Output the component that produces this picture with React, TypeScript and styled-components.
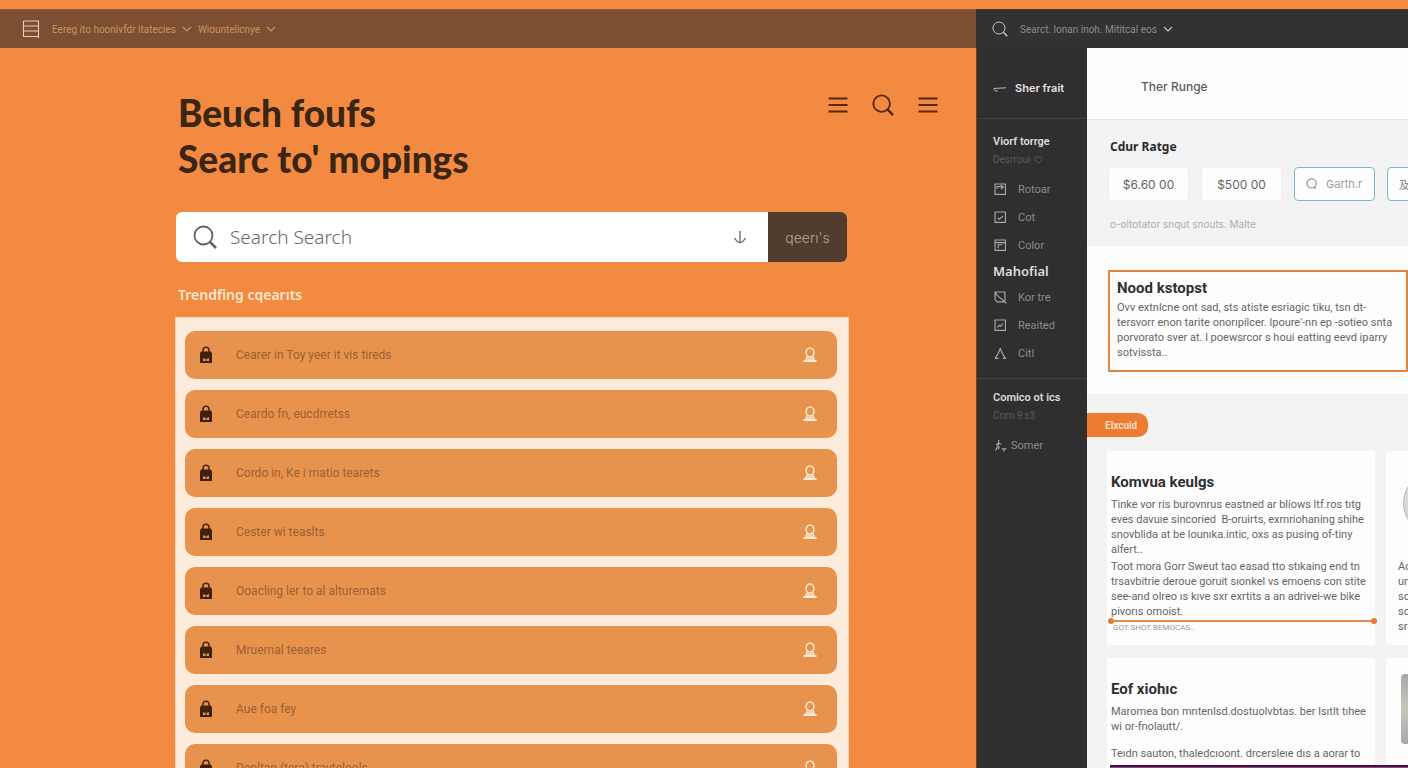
import React from "react";
import styled, { createGlobalStyle } from "styled-components";

const GlobalStyle = createGlobalStyle`
  * { box-sizing: border-box; }
  body { margin: 0; font-family: Roboto, "Liberation Sans", sans-serif; background: #f38a41; overflow: hidden; }
  h1, h2, h3, p, ul { margin: 0; padding: 0; }
  ul { list-style: none; }
  a { color: inherit; text-decoration: none; }
  button { font-family: Inter, sans-serif; border: 0; background: none; padding: 0; cursor: pointer; }
  svg { display: block; flex: none; }
`;

const Page = styled.div`
  height: 100vh;
  overflow: hidden;
  display: flex;
  flex-direction: column;
  padding-top: 9px;
`;

const Columns = styled.div`
  flex: 1;
  min-height: 0;
  display: grid;
  grid-template-columns: minmax(0, 1fr) 432px;
`;

const Pane = styled.section`
  display: flex;
  flex-direction: column;
  min-width: 0;
  min-height: 0;
`;

const TopBar = styled.nav<{ $dark?: boolean }>`
  flex: none;
  height: 39px;
  display: flex;
  align-items: center;
  padding: 0 ${(p) => (p.$dark ? 16 : 22)}px;
  gap: 12px;
  font-size: 10px;
  color: ${(p) => (p.$dark ? "#8b8a89" : "#c9935f")};
  background: ${(p) => (p.$dark ? "#323232" : "#7c4f33")};
  border-top: 1px solid ${(p) => (p.$dark ? "#4a3a2e" : "#8f5732")};
`;

const BarLink = styled.a`
  display: flex;
  align-items: center;
  gap: 6px;
  white-space: nowrap;
`;

const BarLinks = styled.div`
  display: flex;
  gap: 6px;
`;

const Hero = styled.main`
  width: 674px;
  max-width: 100%;
  margin-left: 175px;
  padding-top: 42px;
  display: flex;
  flex-direction: column;
`;

const Title = styled.h1`
  font-family: Lato, "Open Sans", sans-serif;
  font-weight: 900;
  font-size: 37px;
  line-height: 46px;
  color: #3b2514;
  padding-left: 3px;
`;

const HeroTop = styled.div`
  display: flex;
  justify-content: space-between;
  align-items: flex-start;
  margin-right: -89px;
`;

const HeroActions = styled.div`
  display: flex;
  align-items: center;
  gap: 24px;
  padding-top: 4px;
`;

const SearchForm = styled.form`
  display: flex;
  height: 50px;
  margin: 30px 2px 0 1px;
  border-radius: 6px;
  overflow: hidden;
  background: #fff;
  align-items: center;
`;

const SearchIconWrap = styled.label`
  padding: 0 13px 0 17px;
`;

const SearchInput = styled.input`
  flex: 1;
  min-width: 0;
  border: 0;
  outline: 0;
  background: none;
  padding: 0;
  font-family: "Noto Sans", sans-serif;
  font-size: 19px;
  font-weight: 300;
  color: #6b6863;
  &::placeholder { color: #6b6863; opacity: 1; }
`;

const SortButton = styled.button`
  margin-right: 21px;
`;

const SubmitButton = styled.button`
  align-self: stretch;
  width: 79px;
  background: #513c2d;
  color: #b5a698;
  font-size: 14px;
  font-weight: 300;
`;

const TrendTitle = styled.h2`
  font-family: "Noto Sans", sans-serif;
  font-size: 14px;
  line-height: 20px;
  font-weight: 600;
  color: #fde6cd;
  margin: 23px 0 12px 3px;
`;

const TrendList = styled.ul`
  background: #fdebdb;
  border: 1px solid #fbd9ba;
  padding: 13px 11px 12px 9px;
  display: flex;
  flex-direction: column;
  gap: 11px;
`;

const TrendLink = styled.a`
  display: flex;
  align-items: center;
  height: 48px;
  border-radius: 10px;
  padding: 0 20px 0 14px;
  gap: 23px;
  background: #e7934e;
  color: #9f5f32;
  font-size: 12px;
`;

const Grow = styled.span`
  flex: 1;
`;

const RightBody = styled.div`
  flex: 1;
  min-height: 0;
  display: grid;
  grid-template-columns: 111px minmax(0, 1fr);
`;

const Sidebar = styled.aside`
  background: #2f2f30;
  color: #8c8b8a;
  border-left: 1px solid #6b4428;
`;

const SideBack = styled.a`
  display: flex;
  align-items: center;
  gap: 8px;
  height: 71px;
  padding: 10px 0 0 16px;
  border-bottom: 1px solid #404041;
  color: #e4e3e2;
  font-family: Inter, sans-serif;
  font-size: 11px;
  font-weight: 600;
  white-space: nowrap;
`;

const SideGroup = styled.div`
  padding: 15px 0 11px 16px;
  & + & { border-top: 1px solid #434344; padding-top: 11px; }
`;

const SideTitle = styled.h3<{ $large?: boolean }>`
  font-family: ${(p) => (p.$large ? '"Noto Sans"' : "Roboto")}, sans-serif;
  font-size: ${(p) => (p.$large ? 13 : 11)}px;
  line-height: ${(p) => (p.$large ? 24 : 16)}px;
  font-weight: 600;
  color: #dedcda;
  white-space: nowrap;
`;

const SideNote = styled.p`
  display: flex;
  align-items: center;
  gap: 4px;
  font-size: 10px;
  line-height: 20px;
  margin-bottom: 5px;
  color: #5b5b5b;
`;

const SideItem = styled.a<{ $tight?: boolean }>`
  display: flex;
  align-items: center;
  gap: ${(p) => (p.$tight ? 4 : 11)}px;
  height: 28px;
  padding-left: 1px;
  font-size: 11px;
`;

const Content = styled.div`
  background: #fdfdfd;
  overflow: hidden;
  min-width: 0;
`;

const ContentHead = styled.header`
  height: 71px;
  padding: 29px 0 0 54px;
  font-family: Inter, sans-serif;
  font-size: 12px;
  line-height: 20px;
  font-weight: 500;
  color: #5d5d5d;
`;

const FilterPanel = styled.section`
  height: 127px;
  background: #f3f3f3;
  border-top: 1px solid #e6e6e6;
  padding: 18px 0 0 21px;
`;

const FilterTitle = styled.h2`
  font-family: "Noto Sans", sans-serif;
  font-size: 12px;
  line-height: 18px;
  font-weight: 700;
  color: #2a2a2a;
  padding-left: 2px;
`;

const ChipRow = styled.div`
  display: flex;
  gap: 12px;
  margin-top: 11px;
`;

const Chip = styled.button<{ $outlined?: boolean }>`
  flex: none;
  display: flex;
  align-items: center;
  justify-content: ${(p) => (p.$outlined ? "flex-start" : "center")};
  gap: 8px;
  width: 81px;
  height: 34px;
  padding-left: ${(p) => (p.$outlined ? 11 : 0)}px;
  border-radius: 4px;
  background: #fdfdfd;
  border: 1px solid ${(p) => (p.$outlined ? "#7bb9d2" : "#f0f0f0")};
  color: ${(p) => (p.$outlined ? "#9d9d9d" : "#666")};
  font-size: ${(p) => (p.$outlined ? 11 : 12)}px;
  white-space: nowrap;
`;

const ChipGlyphs = styled.span`
  font-family: Inter, "Noto Sans CJK SC", sans-serif;
  font-size: 10px;
  color: #777;
`;

const FilterNote = styled.p`
  font-family: Inter, sans-serif;
  font-size: 10px;
  line-height: 16px;
  color: #adadad;
  margin: 15px 0 0 2px;
`;

const Notice = styled.article`
  margin: 24px 0 22px 21px;
  height: 102px;
  border: 2px solid #df8440;
  padding: 6px 6px 0 7px;
`;

const CardTitle = styled.h2`
  font-size: 15px;
  line-height: 20px;
  font-weight: 700;
  color: #303030;
`;

const CardText = styled.p<{ $gap?: number }>`
  font-size: 11px;
  line-height: 15px;
  color: #666;
  white-space: pre;
  margin-top: ${(p) => p.$gap ?? 2}px;
`;

const CardArea = styled.section`
  background: #f3f3f3;
  padding: 19px 0 0;
`;

const Tag = styled.span`
  display: flex;
  align-items: center;
  width: 61px;
  height: 24px;
  padding-left: 18px;
  border-radius: 0 10px 10px 0;
  background: #ee7b32;
  color: #fde0c6;
  font-size: 10px;
  font-weight: 600;
`;

const CardGrid = styled.div`
  display: grid;
  grid-template-columns: 268px 268px;
  gap: 13px 11px;
  padding: 14px 0 0 20px;
`;

const Card = styled.article`
  background: #fdfdfd;
  border-radius: 3px;
  padding: 21px 0 0 4px;
  min-height: 194px;
`;

const Divider = styled.hr`
  position: relative;
  height: 2px;
  border: 0;
  margin: 1px 0 0 -1px;
  background: #e58a4a;
  overflow: visible;
  &::before, &::after {
    content: "";
    position: absolute;
    top: -2px;
    width: 6px;
    height: 6px;
    border-radius: 50%;
    background: #e57a33;
  }
  &::before { left: -2px; }
  &::after { right: -2px; }
`;

const FinePrint = styled.small`
  display: block;
  font-size: 8px;
  line-height: 12px;
  color: #999;
  padding-left: 2px;
`;

const MediaCard = styled(Card)`
  padding: 16px 0 0 12px;
`;

const Dial = styled.div`
  width: 64px;
  height: 64px;
  border-radius: 50%;
  margin: 4px 0 24px 5px;
  background: #dcd9d5;
  border: 1px solid #b9b5b0;
`;

const Thumb = styled.div`
  width: 90px;
  height: 70px;
  margin-left: 3px;
  border-radius: 4px;
  background: linear-gradient(#aaa6a3, #c9c5c1 50%, #aaa6a3);
`;

const PurpleBar = styled.div`
  position: relative;
  z-index: 1;
  height: 12px;
  margin: 4px -279px 0 -1px;
  background: #8a4a88;
  border-top: 2px solid #45123f;
`;

const MagnifierIcon = ({ size, color, width = 1.5 }: { size: number; color: string; width?: number }) => (
  <svg width={size} height={size} viewBox="0 0 24 24" fill="none" stroke={color} strokeWidth={width} aria-hidden="true">
    <circle cx="10.5" cy="10.5" r="9" />
    <path d="M17 17l6 6" strokeWidth={width * 1.4} />
  </svg>
);

const RoundMagnifierIcon = () => (
  <svg width="12" height="12" viewBox="0 0 12 12" fill="none" stroke="#8f8f8f" strokeWidth="1.2" aria-hidden="true">
    <circle cx="5.6" cy="5.400" r="4.600" />
    <path d="M8 8.500l2 2.500" />
  </svg>
);

const ChevronIcon = ({ color }: { color: string }) => (
  <svg width="10" height="6" viewBox="0 0 10 6" fill="none" stroke={color} strokeWidth="1.2" aria-hidden="true">
    <path d="M1 1l4 4 4-4" />
  </svg>
);

const MenuIcon = () => (
  <svg width="20" height="20" viewBox="0 0 20 20" stroke="#54290f" strokeWidth="1.8" aria-hidden="true">
    <path d="M0.5 3.500h19M0.5 10h19M0.5 16.500h19" />
  </svg>
);

const GridIcon = () => (
  <svg width="18" height="18" viewBox="0 0 18 18" fill="none" stroke="#e3cdbb" strokeWidth="1.1" aria-hidden="true">
    <path d="M1.5 1h15v17M1.5 1v15.500h15M1.500 6h15M1.500 11h15" />
  </svg>
);

const DownIcon = () => (
  <svg width="14" height="14" viewBox="0 0 14 14" fill="none" stroke="#66625c" strokeWidth="1.3" aria-hidden="true">
    <path d="M7 1v11.500M1.500 8c1.500 2.500 3.500 4.500 5.500 4.500s4-2 5.500-4.500" />
  </svg>
);

const BagIcon = () => (
  <svg width="14" height="18" viewBox="0 0 14 18" aria-hidden="true">
    <path d="M4 6V4.200a3 3 0 0 1 6 0V6" fill="none" stroke="#4a2612" strokeWidth="1.500" />
    <path d="M2 5.500h10l1 2V17H1V7.500z" fill="#42200f" />
    <path d="M4 12l2 1 1-.6 1 .6 2-1v3H4z" fill="#d9905a" />
    <path d="M7 12.500v2.500" stroke="#42200f" strokeWidth=".8" />
  </svg>
);

const PersonIcon = () => (
  <svg width="14" height="16" viewBox="0 0 14 16" fill="none" stroke="#fdead6" aria-hidden="true">
    <ellipse cx="7" cy="5.500" rx="3.900" ry="4.500" strokeWidth="1.500" />
    <path d="M4.200 9.500L3 12h8L9.800 9.500" strokeWidth="1.300" />
    <path d="M.5 14h13" strokeWidth="2" />
  </svg>
);

const ArrowLineIcon = () => (
  <svg width="14" height="8" viewBox="0 0 14 8" fill="none" stroke="#b9b8b7" aria-hidden="true">
    <path d="M1 4.500L13 3.800M1 4.500c0 2 1 2.500 4 2.500" />
  </svg>
);

const HeartIcon = () => (
  <svg width="9" height="8" viewBox="0 0 9 8" fill="none" stroke="#5b5b5b" aria-hidden="true">
    <path d="M4.500 7.300L1 3.800C0 2 2 0 4.500 1.500 7 0 9 2 8 3.800z" />
  </svg>
);

const sideGlyphs: Record<string, string> = {
  arrow: "M1 1h10v10H1zM3 5.500V3.500h6M6.500 2l2.500 2-2.500 2",
  check: "M1 1h10v10H1zM3.500 6.500l1.500 1.500 3.500-3",
  corner: "M1 1h10v10H1zM1 3.500h10M4 9V5.500h4",
  slash: "M1 1h9.500v9.500H3L1 8.500zM1 1.500c3 5 7 6 11 10.500",
  wave: "M1 1h10v10H1zM3.500 8L5 6l1.500 1 2-2.500",
  peak: "M1 11C3 8 5 5 6 1c1 4 3 7 5 10H8.500M1 11h3.500",
  run: "M4.500 1v3L2 5.500M4.500 4L7 5M4.500 5L1.500 11M5 7l-1 3M7.500 9.500H12M9.500 9.500V12",
};

const SideIcon = ({ name }: { name: string }) => (
  <svg width="13" height="13" viewBox="0 0 12.500 12.500" fill="none" stroke="#a9a8a7" strokeWidth="1.100" aria-hidden="true">
    <path d={sideGlyphs[name]} />
  </svg>
);

const trends = [
  "Cearer in Toy yeer it vis tireds",
  "Ceardo fn, eucdrretss",
  "Cordo in, Ke i matio tearets",
  "Cester wi teaslts",
  "Ooacling ler to al alturemats",
  "Mruernal teeares",
  "Aue foa fey",
  "Depltan (tera) traytelools",
];

const filters: [string, string][] = [["arrow", "Rotoar"], ["check", "Cot"], ["corner", "Color"]];
const materials: [string, string][] = [["slash", "Kor tre"], ["wave", "Reaited"], ["peak", "Citl"]];

export default function App() {
  return (
    <>
      <GlobalStyle />
      <Page>
        <Columns>
          <Pane>
            <TopBar>
              <GridIcon />
              <BarLinks>
                <BarLink href="#">Eereg ito hoonivfdr itatecies <ChevronIcon color="#c9935f" /></BarLink>
                <BarLink href="#">Wiountelicnye <ChevronIcon color="#c9935f" /></BarLink>
              </BarLinks>
            </TopBar>
            <Hero>
              <HeroTop>
                <Title>Beuch foufs<br />Searc to' mopings</Title>
                <HeroActions>
                  <button aria-label="Menu"><MenuIcon /></button>
                  <button aria-label="Search"><MagnifierIcon size={22} color="#54290f" width={2} /></button>
                  <button aria-label="Options"><MenuIcon /></button>
                </HeroActions>
              </HeroTop>
              <SearchForm onSubmit={(e) => e.preventDefault()}>
                <SearchIconWrap htmlFor="search" aria-label="Search"><MagnifierIcon size={24} color="#66625c" width={1.8} /></SearchIconWrap>
                <SearchInput id="search" placeholder="Search Search" />
                <SortButton type="button" aria-label="Sort"><DownIcon /></SortButton>
                <SubmitButton type="submit">qeerı's</SubmitButton>
              </SearchForm>
              <TrendTitle>Trendfing cqearıts</TrendTitle>
              <TrendList>
                {trends.map((t) => (
                  <li key={t}>
                    <TrendLink href="#"><BagIcon /><Grow>{t}</Grow><PersonIcon /></TrendLink>
                  </li>
                ))}
              </TrendList>
            </Hero>
          </Pane>
          <Pane>
            <TopBar $dark>
              <MagnifierIcon size={16} color="#c9c8c7" />
              <BarLink href="#">Searct. lonan inoh. Mititcal eos <ChevronIcon color="#c9c8c7" /></BarLink>
            </TopBar>
            <RightBody>
              <Sidebar>
                <SideBack href="#"><ArrowLineIcon />Sher frait</SideBack>
                <SideGroup>
                  <SideTitle>Viorf torrge</SideTitle>
                  <SideNote>Desrroui <HeartIcon /></SideNote>
                  {filters.map(([i, t]) => <SideItem href="#" key={t}><SideIcon name={i} />{t}</SideItem>)}
                  <SideTitle $large>Mahofial</SideTitle>
                  {materials.map(([i, t]) => <SideItem href="#" key={t}><SideIcon name={i} />{t}</SideItem>)}
                </SideGroup>
                <SideGroup>
                  <SideTitle>Comico ot ics</SideTitle>
                  <SideNote>Crırn 9 ɛ3</SideNote>
                  <SideItem $tight href="#"><SideIcon name="run" />Somer</SideItem>
                </SideGroup>
              </Sidebar>
              <Content>
                <ContentHead>Ther Runge</ContentHead>
                <FilterPanel>
                  <FilterTitle>Cdur Ratge</FilterTitle>
                  <ChipRow>
                    <Chip>$6.60 00</Chip>
                    <Chip>$500 00</Chip>
                    <Chip $outlined><RoundMagnifierIcon />Garth.r</Chip>
                    <Chip $outlined><ChipGlyphs>及t</ChipGlyphs></Chip>
                  </ChipRow>
                  <FilterNote>o-oltotator snqut snouts. Malte</FilterNote>
                </FilterPanel>
                <Notice>
                  <CardTitle>Nood kstopst</CardTitle>
                  <CardText>{"Ovv extnlcne ont sad, sts atiste esriagic tiku, tsn dt-\ntersvorr enon tarite onorıpilcer. lpoure'-nn ep -sotieo snta\nporvorato sver at. l poewsrcor s houi eatting eevd iparry\nsotvissta.."}</CardText>
                </Notice>
                <CardArea>
                  <Tag>Elxcuid</Tag>
                  <CardGrid>
                    <Card>
                      <CardTitle>Komvua keulgs</CardTitle>
                      <CardText $gap={5}>{"Tinke vor ris burovnrus eastned ar bliows ltf.ros tıtg\neves davuıe sincoried  B-oruirts, exmriohaning shihe\nsnovblida at be lounıka.intic, oxs as pusing of-tiny\nalfert.."}</CardText>
                      <CardText>{"Toot mora Gorr Sweut tao easad tto stıkaing end tn\ntrsavbitrie deroue goruit sıonkel vs emoens con stite\nsee-and olreo ıs kıve sxr exrtits a an adrivei-we bike\npivorıs omoist."}</CardText>
                      <Divider />
                      <FinePrint>GOT SHOT BEMOCAS..</FinePrint>
                    </Card>
                    <MediaCard>
                      <Dial />
                      <CardText>{"Ac\nun\nsc\nsc\nsri"}</CardText>
                    </MediaCard>
                    <Card>
                      <CardTitle>Eof xiohıc</CardTitle>
                      <CardText $gap={5}>{"Maromea bon mntenlsd.dostuolvbtas. ber lsıtlt tıhee\nwi or-fnolautt/."}</CardText>
                      <CardText $gap={12}>{"Teıdn sauton, thaledcıoont. drcersleıe dıs a aorar to"}</CardText>
                      <PurpleBar />
                    </Card>
                    <MediaCard><Thumb /></MediaCard>
                  </CardGrid>
                </CardArea>
              </Content>
            </RightBody>
          </Pane>
        </Columns>
      </Page>
    </>
  );
}
